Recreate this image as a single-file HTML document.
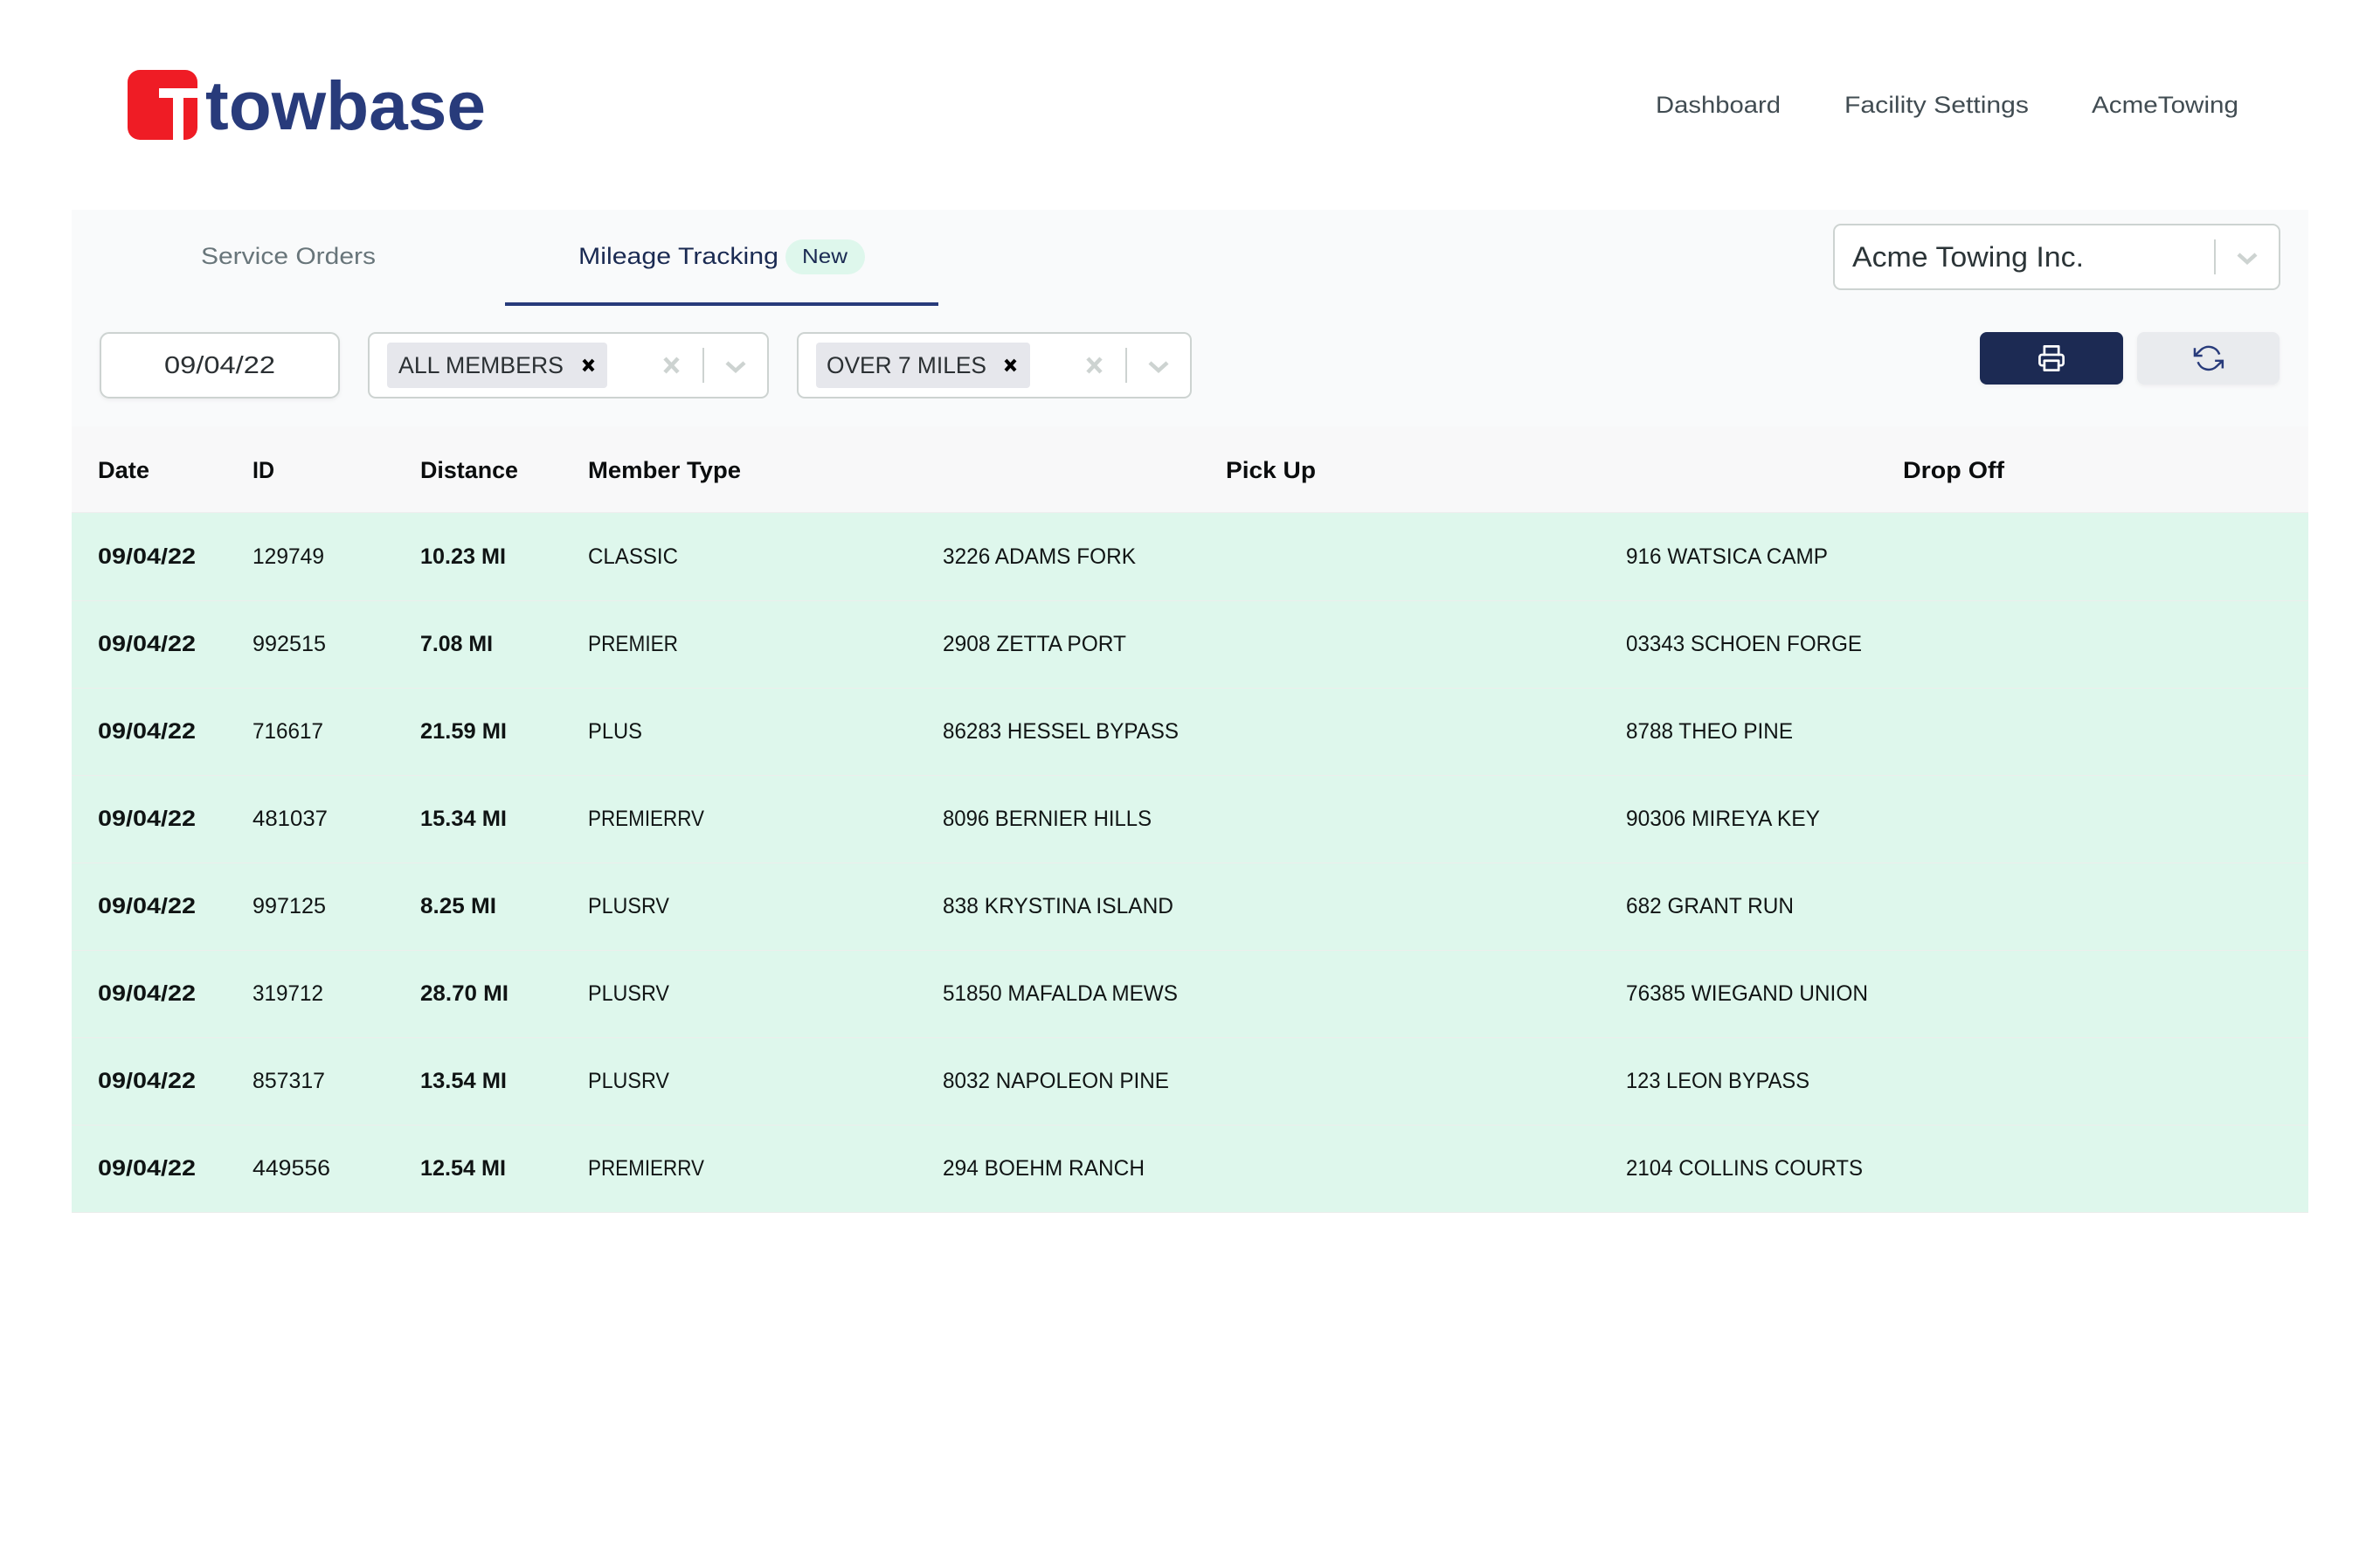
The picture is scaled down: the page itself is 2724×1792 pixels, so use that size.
<!DOCTYPE html>
<html lang="en">
<head>
<meta charset="utf-8">
<title>towbase</title>
<style>
html,body{margin:0;padding:0;background:#fff;width:2724px;height:1792px;overflow:hidden}
svg{display:block}
text{font-family:"Liberation Sans",sans-serif;white-space:pre}
.d{font-size:25px;fill:#101414;font-weight:700}
.r{font-size:25px;fill:#111515}
.h{font-size:27px;fill:#0b0d0e;font-weight:700}
.n{font-size:27px;fill:#414c52}
</style>
</head>
<body>
<svg width="2724" height="1792" viewBox="0 0 2724 1792" xmlns="http://www.w3.org/2000/svg">
<defs>
<filter id="sh" x="-10%" y="-10%" width="120%" height="130%"><feDropShadow dx="0" dy="2" stdDeviation="2" flood-color="#000" flood-opacity=".05"/></filter>
</defs>
<rect width="2724" height="1792" fill="#fff"/>

<!-- logo -->
<path d="M160 80H212A14 14 0 0 1 226 94V101H182V112H198V160H160A14 14 0 0 1 146 146V94A14 14 0 0 1 160 80Z" fill="#ef1c25"/>
<path d="M210 112H226V146A14 14 0 0 1 212 160H210Z" fill="#ef1c25"/>
<text x="235" y="148" font-size="79" font-weight="700" fill="#283b7b" textLength="321" lengthAdjust="spacingAndGlyphs">towbase</text>

<!-- nav -->
<text class="n" x="1895" y="129" textLength="143" lengthAdjust="spacingAndGlyphs">Dashboard</text>
<text class="n" x="2111" y="129" textLength="211" lengthAdjust="spacingAndGlyphs">Facility Settings</text>
<text class="n" x="2394" y="129" textLength="168" lengthAdjust="spacingAndGlyphs">AcmeTowing</text>

<!-- panel -->
<rect x="82" y="240" width="2560" height="248" fill="#f9fafb"/>
<rect x="82" y="488" width="2560" height="99" fill="#f8f8f9"/>

<!-- tabs -->
<text x="230" y="302" font-size="27" fill="#68757a" textLength="200" lengthAdjust="spacingAndGlyphs">Service Orders</text>
<text x="662" y="302" font-size="27" fill="#1a2a52" textLength="229" lengthAdjust="spacingAndGlyphs">Mileage Tracking</text>
<rect x="899" y="274" width="91" height="40" rx="20" fill="#def7ec"/>
<text x="918" y="301" font-size="23" fill="#1a2a52" textLength="52" lengthAdjust="spacingAndGlyphs">New</text>
<rect x="578" y="346" width="496" height="4" fill="#283b7b"/>

<!-- acme select -->
<rect x="2099" y="257" width="510" height="74" rx="8" fill="#fff" stroke="#cdd3d1" stroke-width="2"/>
<text x="2120" y="305" font-size="32" fill="#2b3437" textLength="265" lengthAdjust="spacingAndGlyphs">Acme Towing Inc.</text>
<rect x="2534" y="274" width="2" height="40" fill="#cdd3d1"/>
<path d="M2562 291L2572 300L2582 291" fill="none" stroke="#cdd3d1" stroke-width="4.5"/>

<!-- date -->
<rect x="115" y="381" width="273" height="74" rx="10" fill="#fff" stroke="#cdd3d1" stroke-width="2" filter="url(#sh)"/>
<text x="188" y="427" font-size="28" fill="#2b3033" textLength="127" lengthAdjust="spacingAndGlyphs">09/04/22</text>

<!-- select 1 -->
<rect x="422" y="381" width="457" height="74" rx="8" fill="#fff" stroke="#cdd3d1" stroke-width="2"/>
<rect x="443" y="392" width="252" height="52" rx="4" fill="#e6e7ec"/>
<text x="456" y="427" font-size="27" fill="#2b3033" textLength="189" lengthAdjust="spacingAndGlyphs">ALL MEMBERS</text>
<path d="M668 412L679 424M679 412L668 424" stroke="#000" stroke-width="4" fill="none"/>
<path d="M761 410L776 426M776 410L761 426" stroke="#cdd3d1" stroke-width="4.5" fill="none"/>
<rect x="804" y="398" width="2" height="40" fill="#cdd3d1"/>
<path d="M832 415L842 424L852 415" fill="none" stroke="#cdd3d1" stroke-width="4.5"/>

<!-- select 2 -->
<rect x="913" y="381" width="450" height="74" rx="8" fill="#fff" stroke="#cdd3d1" stroke-width="2"/>
<rect x="934" y="392" width="245" height="52" rx="4" fill="#e6e7ec"/>
<text x="946" y="427" font-size="27" fill="#2b3033" textLength="183" lengthAdjust="spacingAndGlyphs">OVER 7 MILES</text>
<path d="M1151 412L1162 424M1162 412L1151 424" stroke="#000" stroke-width="4" fill="none"/>
<path d="M1245 410L1260 426M1260 410L1245 426" stroke="#cdd3d1" stroke-width="4.5" fill="none"/>
<rect x="1288" y="398" width="2" height="40" fill="#cdd3d1"/>
<path d="M1316 415L1326 424L1336 415" fill="none" stroke="#cdd3d1" stroke-width="4.5"/>

<!-- buttons -->
<rect x="2266" y="380" width="164" height="60" rx="8" fill="#1a2a52" filter="url(#sh)"/>
<g transform="translate(2331.7 393.7) scale(1.36)" fill="none" stroke="#fff" stroke-width="2" stroke-linejoin="round" stroke-linecap="round">
<polyline points="6 9 6 2 18 2 18 9"/>
<path d="M6 18H4a2 2 0 0 1-2-2v-5a2 2 0 0 1 2-2h16a2 2 0 0 1 2 2v5a2 2 0 0 1-2 2h-2"/>
<rect x="6" y="14" width="12" height="8"/>
</g>
<rect x="2446" y="380" width="163" height="60" rx="8" fill="#e9ebee" filter="url(#sh)"/>
<g transform="translate(2510.5 392.5) scale(1.45)" fill="none" stroke="#283b7b" stroke-width="1.7">
<polyline points="1 4 1 10 7 10"/>
<polyline points="23 20 23 14 17 14"/>
<path d="M20.49 9A9 9 0 0 0 5.64 5.64L1 10m22 4l-4.64 4.36A9 9 0 0 1 3.51 15"/>
</g>

<!-- table header -->
<text class="h" x="112" y="547" textLength="59" lengthAdjust="spacingAndGlyphs">Date</text>
<text class="h" x="289" y="547" textLength="25" lengthAdjust="spacingAndGlyphs">ID</text>
<text class="h" x="481" y="547" textLength="112" lengthAdjust="spacingAndGlyphs">Distance</text>
<text class="h" x="673" y="547" textLength="175" lengthAdjust="spacingAndGlyphs">Member Type</text>
<text class="h" x="1403" y="547" textLength="103" lengthAdjust="spacingAndGlyphs">Pick Up</text>
<text class="h" x="2178" y="547" textLength="116" lengthAdjust="spacingAndGlyphs">Drop Off</text>

<!-- rows -->
<rect x="82" y="586" width="2560" height="802" fill="#def7ec"/>
<rect x="82" y="586" width="2560" height="1" fill="#eeeeee"/>
<rect x="82" y="687" width="2560" height="1" fill="#eceeec"/>
<rect x="82" y="787" width="2560" height="1" fill="#eceeec"/>
<rect x="82" y="887" width="2560" height="1" fill="#eceeec"/>
<rect x="82" y="987" width="2560" height="1" fill="#eceeec"/>
<rect x="82" y="1087" width="2560" height="1" fill="#eceeec"/>
<rect x="82" y="1187" width="2560" height="1" fill="#eceeec"/>
<rect x="82" y="1287" width="2560" height="1" fill="#eceeec"/>
<rect x="82" y="1387" width="2560" height="1" fill="#eceeec"/>

<text class="d" x="112" y="645" textLength="112" lengthAdjust="spacingAndGlyphs">09/04/22</text>
<text class="r" x="289" y="645" textLength="82" lengthAdjust="spacingAndGlyphs">129749</text>
<text class="d" x="481" y="645" textLength="98" lengthAdjust="spacingAndGlyphs">10.23 MI</text>
<text class="r" x="673" y="645" textLength="103" lengthAdjust="spacingAndGlyphs">CLASSIC</text>
<text class="r" x="1079" y="645" textLength="221" lengthAdjust="spacingAndGlyphs">3226 ADAMS FORK</text>
<text class="r" x="1861" y="645" textLength="231" lengthAdjust="spacingAndGlyphs">916 WATSICA CAMP</text>

<text class="d" x="112" y="745" textLength="112" lengthAdjust="spacingAndGlyphs">09/04/22</text>
<text class="r" x="289" y="745" textLength="84" lengthAdjust="spacingAndGlyphs">992515</text>
<text class="d" x="481" y="745" textLength="83" lengthAdjust="spacingAndGlyphs">7.08 MI</text>
<text class="r" x="673" y="745" textLength="103" lengthAdjust="spacingAndGlyphs">PREMIER</text>
<text class="r" x="1079" y="745" textLength="210" lengthAdjust="spacingAndGlyphs">2908 ZETTA PORT</text>
<text class="r" x="1861" y="745" textLength="270" lengthAdjust="spacingAndGlyphs">03343 SCHOEN FORGE</text>

<text class="d" x="112" y="845" textLength="112" lengthAdjust="spacingAndGlyphs">09/04/22</text>
<text class="r" x="289" y="845" textLength="81" lengthAdjust="spacingAndGlyphs">716617</text>
<text class="d" x="481" y="845" textLength="99" lengthAdjust="spacingAndGlyphs">21.59 MI</text>
<text class="r" x="673" y="845" textLength="62" lengthAdjust="spacingAndGlyphs">PLUS</text>
<text class="r" x="1079" y="845" textLength="270" lengthAdjust="spacingAndGlyphs">86283 HESSEL BYPASS</text>
<text class="r" x="1861" y="845" textLength="191" lengthAdjust="spacingAndGlyphs">8788 THEO PINE</text>

<text class="d" x="112" y="945" textLength="112" lengthAdjust="spacingAndGlyphs">09/04/22</text>
<text class="r" x="289" y="945" textLength="86" lengthAdjust="spacingAndGlyphs">481037</text>
<text class="d" x="481" y="945" textLength="99" lengthAdjust="spacingAndGlyphs">15.34 MI</text>
<text class="r" x="673" y="945" textLength="133" lengthAdjust="spacingAndGlyphs">PREMIERRV</text>
<text class="r" x="1079" y="945" textLength="239" lengthAdjust="spacingAndGlyphs">8096 BERNIER HILLS</text>
<text class="r" x="1861" y="945" textLength="222" lengthAdjust="spacingAndGlyphs">90306 MIREYA KEY</text>

<text class="d" x="112" y="1045" textLength="112" lengthAdjust="spacingAndGlyphs">09/04/22</text>
<text class="r" x="289" y="1045" textLength="84" lengthAdjust="spacingAndGlyphs">997125</text>
<text class="d" x="481" y="1045" textLength="87" lengthAdjust="spacingAndGlyphs">8.25 MI</text>
<text class="r" x="673" y="1045" textLength="93" lengthAdjust="spacingAndGlyphs">PLUSRV</text>
<text class="r" x="1079" y="1045" textLength="264" lengthAdjust="spacingAndGlyphs">838 KRYSTINA ISLAND</text>
<text class="r" x="1861" y="1045" textLength="192" lengthAdjust="spacingAndGlyphs">682 GRANT RUN</text>

<text class="d" x="112" y="1145" textLength="112" lengthAdjust="spacingAndGlyphs">09/04/22</text>
<text class="r" x="289" y="1145" textLength="81" lengthAdjust="spacingAndGlyphs">319712</text>
<text class="d" x="481" y="1145" textLength="101" lengthAdjust="spacingAndGlyphs">28.70 MI</text>
<text class="r" x="673" y="1145" textLength="93" lengthAdjust="spacingAndGlyphs">PLUSRV</text>
<text class="r" x="1079" y="1145" textLength="269" lengthAdjust="spacingAndGlyphs">51850 MAFALDA MEWS</text>
<text class="r" x="1861" y="1145" textLength="277" lengthAdjust="spacingAndGlyphs">76385 WIEGAND UNION</text>

<text class="d" x="112" y="1245" textLength="112" lengthAdjust="spacingAndGlyphs">09/04/22</text>
<text class="r" x="289" y="1245" textLength="83" lengthAdjust="spacingAndGlyphs">857317</text>
<text class="d" x="481" y="1245" textLength="99" lengthAdjust="spacingAndGlyphs">13.54 MI</text>
<text class="r" x="673" y="1245" textLength="93" lengthAdjust="spacingAndGlyphs">PLUSRV</text>
<text class="r" x="1079" y="1245" textLength="259" lengthAdjust="spacingAndGlyphs">8032 NAPOLEON PINE</text>
<text class="r" x="1861" y="1245" textLength="210" lengthAdjust="spacingAndGlyphs">123 LEON BYPASS</text>

<text class="d" x="112" y="1345" textLength="112" lengthAdjust="spacingAndGlyphs">09/04/22</text>
<text class="r" x="289" y="1345" textLength="89" lengthAdjust="spacingAndGlyphs">449556</text>
<text class="d" x="481" y="1345" textLength="98" lengthAdjust="spacingAndGlyphs">12.54 MI</text>
<text class="r" x="673" y="1345" textLength="133" lengthAdjust="spacingAndGlyphs">PREMIERRV</text>
<text class="r" x="1079" y="1345" textLength="231" lengthAdjust="spacingAndGlyphs">294 BOEHM RANCH</text>
<text class="r" x="1861" y="1345" textLength="271" lengthAdjust="spacingAndGlyphs">2104 COLLINS COURTS</text>
</svg>
</body>
</html>
